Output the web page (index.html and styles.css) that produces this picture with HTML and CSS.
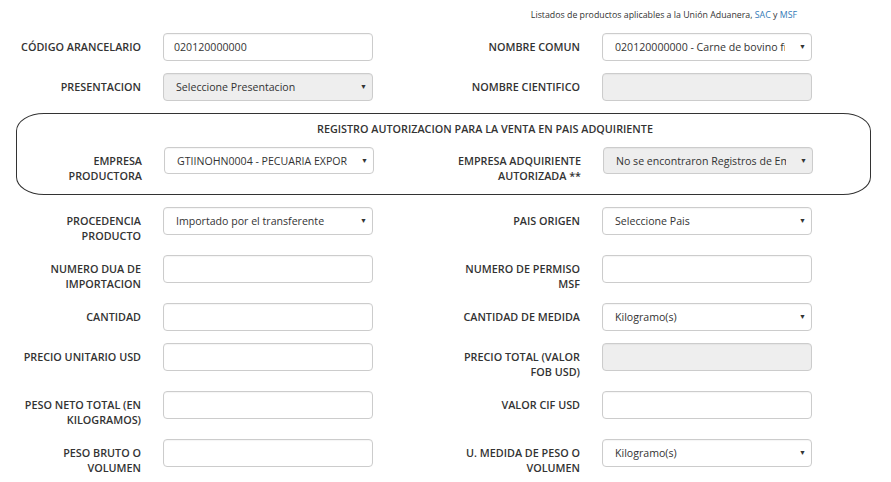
FILE: index.html
```html
<!DOCTYPE html>
<html lang="es">

<head>
    <meta charset="utf-8">
    <title>Registro de Producto</title>
    <link rel="stylesheet" href="styles.css">
</head>

<body>
    <div class="note">
        Listados de productos aplicables a la Unión Aduanera, <a href="#">SAC</a> y <a href="#">MSF</a>
    </div>

    <div class="form-row">
        <div class="field">
            <label>CÓDIGO ARANCELARIO</label>
            <input type="text" class="control" value="020120000000">
        </div>
        <div class="field">
            <label>NOMBRE COMUN</label>
            <div class="select-wrap">
                <select class="control">
                    <option>020120000000 - Carne de bovino fresca o refrigerada</option>
                </select>
            </div>
        </div>
    </div>

    <div class="form-row">
        <div class="field">
            <label>PRESENTACION</label>
            <div class="select-wrap">
                <select class="control" disabled>
                    <option>Seleccione Presentacion</option>
                </select>
            </div>
        </div>
        <div class="field">
            <label>NOMBRE CIENTIFICO</label>
            <input type="text" class="control" disabled>
        </div>
    </div>

    <div class="box">
        <div class="box-title">REGISTRO AUTORIZACION PARA LA VENTA EN PAIS ADQUIRIENTE</div>
        <div class="form-row">
            <div class="field">
                <label>EMPRESA PRODUCTORA</label>
                <div class="select-wrap">
                    <select class="control small">
                        <option>GTIINOHN0004 - PECUARIA EXPORTADORA</option>
                    </select>
                </div>
            </div>
            <div class="field">
                <label>EMPRESA ADQUIRIENTE AUTORIZADA **</label>
                <div class="select-wrap">
                    <select class="control small" disabled>
                        <option>No se encontraron Registros de Empresas</option>
                    </select>
                </div>
            </div>
        </div>
    </div>

    <div class="form-row">
        <div class="field">
            <label>PROCEDENCIA PRODUCTO</label>
            <div class="select-wrap">
                <select class="control">
                    <option>Importado por el transferente</option>
                </select>
            </div>
        </div>
        <div class="field">
            <label>PAIS ORIGEN</label>
            <div class="select-wrap">
                <select class="control">
                    <option>Seleccione Pais</option>
                </select>
            </div>
        </div>
    </div>

    <div class="form-row">
        <div class="field">
            <label>NUMERO DUA DE IMPORTACION</label>
            <input type="text" class="control">
        </div>
        <div class="field">
            <label>NUMERO DE PERMISO MSF</label>
            <input type="text" class="control">
        </div>
    </div>

    <div class="form-row">
        <div class="field">
            <label>CANTIDAD</label>
            <input type="text" class="control">
        </div>
        <div class="field">
            <label>CANTIDAD DE MEDIDA</label>
            <div class="select-wrap">
                <select class="control">
                    <option>Kilogramo(s)</option>
                </select>
            </div>
        </div>
    </div>

    <div class="form-row">
        <div class="field">
            <label>PRECIO UNITARIO USD</label>
            <input type="text" class="control">
        </div>
        <div class="field">
            <label>PRECIO TOTAL (VALOR FOB USD)</label>
            <input type="text" class="control" disabled>
        </div>
    </div>

    <div class="form-row">
        <div class="field">
            <label>PESO NETO TOTAL (EN KILOGRAMOS)</label>
            <input type="text" class="control">
        </div>
        <div class="field">
            <label>VALOR CIF USD</label>
            <input type="text" class="control">
        </div>
    </div>

    <div class="form-row">
        <div class="field">
            <label>PESO BRUTO O VOLUMEN</label>
            <input type="text" class="control">
        </div>
        <div class="field">
            <label>U. MEDIDA DE PESO O VOLUMEN</label>
            <div class="select-wrap">
                <select class="control">
                    <option>Kilogramo(s)</option>
                </select>
            </div>
        </div>
    </div>
</body>

</html>
```

FILE: styles.css
```css
body {
    margin: 0;
    padding: 0 0 0 17px;
    font-family: 'Open Sans', sans-serif;
    font-size: 12px;
    color: #333;
    background: #fff;
}

.note {
    font-size: 8.8px;
    color: #333;
    text-align: right;
    padding: 9px 94px 0 0;
    height: 24px;
    box-sizing: border-box;
    margin-bottom: 9px;
}

.note a {
    color: #337ab7;
    text-decoration: none;
}

.form-row {
    display: flex;
    margin-bottom: 12px;
}

.field {
    display: flex;
    align-items: flex-start;
    width: 439px;
    flex-shrink: 0;
}

.field label {
    width: 124px;
    margin-right: 22px;
    padding-top: 7px;
    text-align: right;
    font-size: 10.8px;
    font-weight: 600;
    line-height: 14.5px;
    flex-shrink: 0;
}

.control {
    width: 210px;
    height: 28px;
    box-sizing: border-box;
    padding: 0 10px;
    border: 1px solid #ccc;
    border-radius: 4px;
    background-color: #fff;
    font-family: 'Open Sans', sans-serif;
    font-size: 10.6px;
    color: #333;
    box-shadow: inset 0 1px 1px rgba(0, 0, 0, 0.04);
    outline: none;
}

.control:disabled {
    background-color: #eee;
    color: #333;
    opacity: 1;
}

.control.small {
    height: 27px;
}

select.control {
    appearance: none;
    -webkit-appearance: none;
    padding: 0 26px 0 12px;
}

.select-wrap {
    position: relative;
}

.select-wrap:after {
    content: "\25BC";
    position: absolute;
    right: 6px;
    top: 9px;
    font-size: 7px;
    color: #333;
    pointer-events: none;
}

.box {
    width: 855px;
    box-sizing: border-box;
    margin: 0 0 12px -1px;
    padding: 6px 0 11px 1px;
    border: 1px solid #333;
    border-radius: 28px / 18px;
}

.box-title {
    font-size: 10.8px;
    font-weight: 600;
    text-align: center;
    padding-left: 82px;
    line-height: 17px;
    margin-bottom: 10px;
}

.box .form-row {
    margin-bottom: 0;
}
```
